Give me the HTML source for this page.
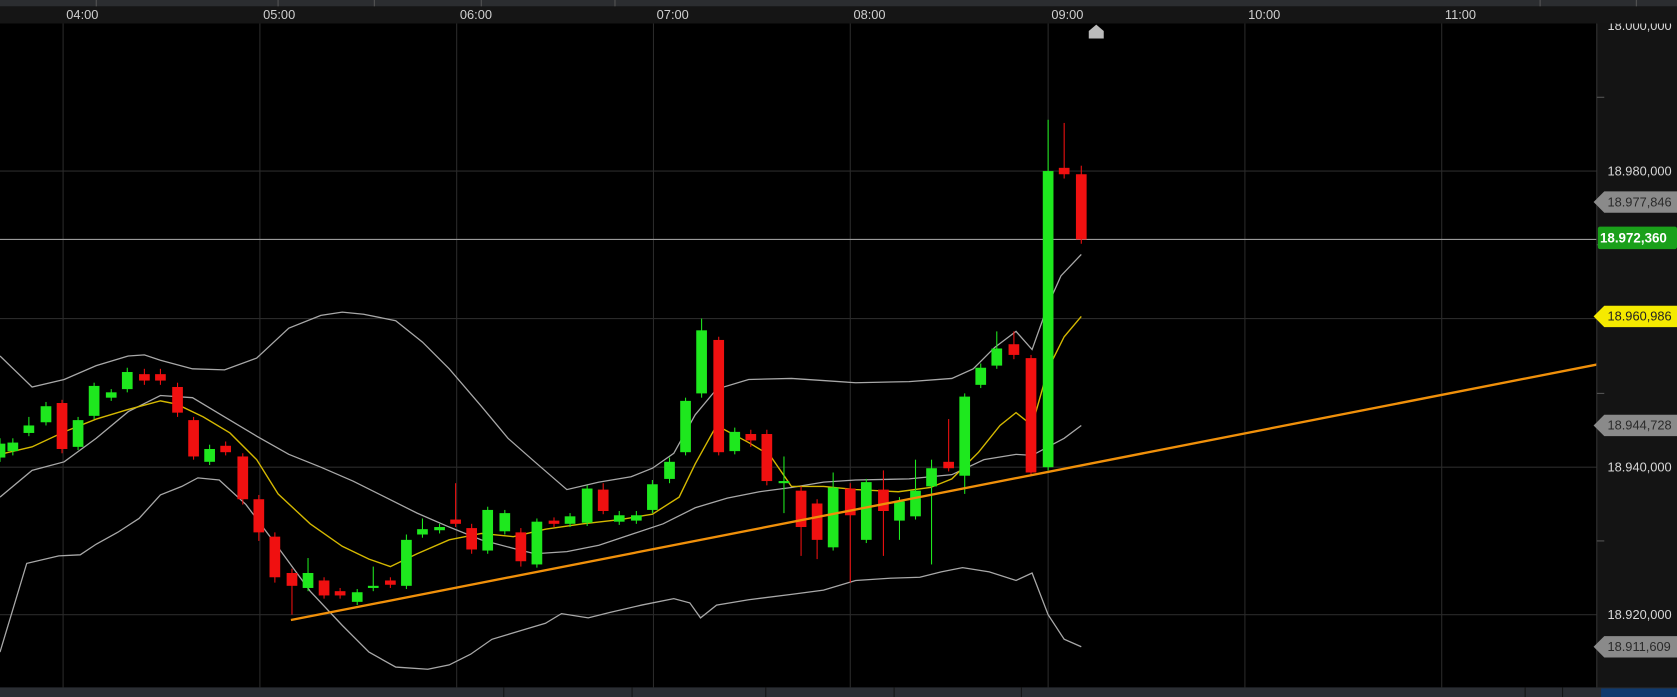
<!DOCTYPE html>
<html><head><meta charset="utf-8"><style>
html,body{margin:0;padding:0;background:#000;width:1677px;height:697px;overflow:hidden}
svg{display:block}
text{font-family:"Liberation Sans",Arial,sans-serif}
</style></head><body>
<svg width="1677" height="697" viewBox="0 0 1568 652" preserveAspectRatio="none" xmlns="http://www.w3.org/2000/svg">
<rect x="0" y="0" width="1568" height="652" fill="#000"/>
<g stroke="#2a2a2a" stroke-width="1">
<line x1="59" y1="22" x2="59" y2="643"/><line x1="243" y1="22" x2="243" y2="643"/><line x1="427" y1="22" x2="427" y2="643"/><line x1="611" y1="22" x2="611" y2="643"/><line x1="795" y1="22" x2="795" y2="643"/><line x1="980" y1="22" x2="980" y2="643"/><line x1="1164" y1="22" x2="1164" y2="643"/><line x1="1348" y1="22" x2="1348" y2="643"/>
<line x1="0" y1="160" x2="1493" y2="160"/><line x1="0" y1="298" x2="1493" y2="298"/><line x1="0" y1="437" x2="1493" y2="437"/><line x1="0" y1="575" x2="1493" y2="575"/>
</g>
<line x1="0" y1="224" x2="1493" y2="224" stroke="#9a9a9a" stroke-width="1"/>
<path d="M1018 36 L1018 29 L1025 23 L1032 29 L1032 36 Z" fill="#bbb"/>
<g fill="none" stroke="#a8a8a8" stroke-width="1.2">
<polyline points="0,333 30,362 60,355 90,342 120,333 135,332 150,337 180,345 210,346 240,335 270,307 300,295 320,292 340,294 370,300 395,320 420,345 450,380 475,410 500,432 530,458 560,451 590,446 610,438 630,424 650,388 670,364 700,355 740,354 770,356 800,358 850,357 890,354 910,345 930,325 950,310 965,327 980,285 992,258 1011,238"/>
<polyline points="0,465 30,440 60,432 90,410 120,385 150,370 180,372 210,390 240,408 270,425 300,437 330,450 360,465 390,480 420,493 450,505 480,513 500,518 530,516 560,510 590,500 620,490 650,475 680,466 710,460 740,456 770,451 800,449 850,448 890,444 920,430 950,425 965,426 980,418 995,410 1011,398"/>
<polyline points="0,610 25,527 55,520 75,519 90,509 110,498 130,485 150,463 170,455 185,447 205,449 230,472 260,512 290,553 320,585 345,610 370,624 400,626 420,622 440,612 460,598 490,589 510,583 525,574 550,578 570,573 600,566 630,560 645,564 655,578 670,566 700,561 740,556 770,552 800,543 830,541 860,540 880,535 900,531 925,535 950,543 965,536 980,575 995,598 1011,605"/>
</g>
<polyline fill="none" stroke="#d4b800" stroke-width="1.3" points="0,425 30,418 60,404 90,392 120,383 150,375 165,378 190,390 215,405 240,430 260,462 290,490 320,511 345,523 365,530 390,518 420,505 450,499 480,502 510,495 545,490 580,486 610,481 635,465 650,434 670,398 700,414 720,426 740,455 770,455 800,458 840,460 870,456 890,448 915,423 935,398 950,386 965,398 980,345 995,315 1011,296"/>
<g id="c"></g>
<line x1="272" y1="580" x2="1493" y2="341" stroke="#f0900a" stroke-width="2.2"/>
<rect x="1493" y="22" width="75" height="621" fill="#141414"/>
<line x1="1493" y1="22" x2="1493" y2="643" stroke="#333"/>
<g fill="#d8d8d8" font-size="12"><text x="1503" y="28">18.000,000</text><text x="1503" y="164">18.980,000</text><text x="1503" y="441">18.940,000</text><text x="1503" y="579">18.920,000</text></g>
<g stroke="#555"><line x1="1493" y1="91" x2="1500" y2="91"/><line x1="1493" y1="229" x2="1500" y2="229"/><line x1="1493" y1="368" x2="1500" y2="368"/><line x1="1493" y1="506" x2="1500" y2="506"/></g>
<path d="M1490 189 L1500 179 L1568 179 L1568 199 L1500 199 Z" fill="#8a8a8a"/><text x="1503" y="193" font-size="12" fill="#2a2a2a">18.977,846</text>
<rect x="1494" y="212" width="74" height="21" rx="2" fill="#1aa01a"/><text x="1496" y="227" font-size="12.5" font-weight="bold" fill="#fff">18.972,360</text>
<path d="M1490 296 L1500 286 L1568 286 L1568 306 L1500 306 Z" fill="#f5ea00"/><text x="1503" y="300" font-size="12" fill="#222">18.960,986</text>
<path d="M1490 398 L1500 388 L1568 388 L1568 408 L1500 408 Z" fill="#8a8a8a"/><text x="1503" y="402" font-size="12" fill="#2a2a2a">18.944,728</text>
<path d="M1490 605 L1500 595 L1568 595 L1568 615 L1500 615 Z" fill="#8a8a8a"/><text x="1503" y="609" font-size="12" fill="#2a2a2a">18.911,609</text>
<rect x="0" y="0" width="1568" height="6" fill="#2b2d30"/>
<g stroke="#555" stroke-width="1"><line x1="90" y1="0" x2="90" y2="6"/><line x1="260" y1="0" x2="260" y2="6"/><line x1="350" y1="0" x2="350" y2="6"/><line x1="450" y1="0" x2="450" y2="6"/><line x1="575" y1="0" x2="575" y2="6"/><line x1="1440" y1="0" x2="1440" y2="6"/><line x1="1530" y1="0" x2="1530" y2="6"/></g>
<rect x="0" y="6" width="1568" height="16" fill="#151515"/>
<g fill="#cfcfcf" font-size="12">
<text x="62" y="18">04:00</text><text x="246" y="18">05:00</text><text x="430" y="18">06:00</text><text x="614" y="18">07:00</text><text x="798" y="18">08:00</text><text x="983" y="18">09:00</text><text x="1167" y="18">10:00</text><text x="1351" y="18">11:00</text>
</g>
<rect x="0" y="643" width="1568" height="9" fill="#2b2e33"/>
<g stroke="#151515"><line x1="471" y1="643" x2="471" y2="652"/><line x1="591" y1="643" x2="591" y2="652"/><line x1="716" y1="643" x2="716" y2="652"/><line x1="836" y1="643" x2="836" y2="652"/><line x1="955" y1="643" x2="955" y2="652"/><line x1="1426" y1="643" x2="1426" y2="652"/><line x1="1461" y1="643" x2="1461" y2="652"/></g>
<rect x="1497" y="644" width="71" height="8" fill="#0f3a6e"/>
</svg>
<script>
var d=[[0,428,415,410,432],[12,422,414,410,426],[27,405,398,390,408],[43,395,380,376,398],[58,377,420,374,424],[73,418,393,390,421],[88,389,361,358,392],[104,372,367,364,375],[119,364,348,344,367],[135,350,356,345,360],[150,350,356,345,360],[166,362,386,358,390],[181,393,427,390,430],[196,432,420,416,435],[211,417,423,413,426],[227,427,467,424,472],[242,467,498,463,506],[257,502,540,498,545],[273,536,548,532,575],[288,550,536,522,553],[303,543,557,540,560],[318,553,557,550,560],[334,563,554,551,566],[349,550,548,530,553],[365,543,547,540,550],[380,548,505,500,551],[395,500,495,485,503],[411,496,493,490,499],[426,486,490,452,493],[441,494,514,490,518],[456,515,477,474,518],[472,497,480,477,500],[487,498,525,494,530],[502,528,488,485,531],[518,487,490,484,493],[533,490,483,480,493],[549,489,457,454,492],[564,458,478,452,481],[579,488,482,478,491],[595,487,482,478,490],[610,477,453,449,480],[626,448,432,428,452],[641,423,375,372,426],[656,368,309,298,372],[672,318,423,315,426],[687,422,404,400,425],[702,406,412,402,418],[717,406,450,402,454],[733,452,450,427,480],[749,459,493,455,520],[764,471,505,467,523],[779,512,456,442,515],[795,457,482,452,545],[810,505,451,448,508],[826,458,478,440,520],[841,487,469,465,505],[856,483,459,430,486],[871,455,438,430,528],[887,432,438,392,441],[902,445,371,368,462],[917,360,344,340,363],[932,342,326,310,345],[948,322,332,310,336],[964,335,442,332,445],[980,437,160,112,440],[995,157,163,115,167],[1011,163,224,155,228]];
var g=document.getElementById('c'),s='';
d.forEach(function(c){var up=c[2]<c[1];var col=up?'#1ee81e':'#f01010';var t=Math.min(c[1],c[2]),b=Math.max(c[1],c[2]);if(b-t<2){b=t+2;}
s+='<line x1="'+c[0]+'" y1="'+c[3]+'" x2="'+c[0]+'" y2="'+c[4]+'" stroke="'+col+'" stroke-width="1"/>';
s+='<rect x="'+(c[0]-5)+'" y="'+t+'" width="10" height="'+(b-t)+'" fill="'+col+'"/>';});
g.innerHTML=s;
</script>
</body></html>
